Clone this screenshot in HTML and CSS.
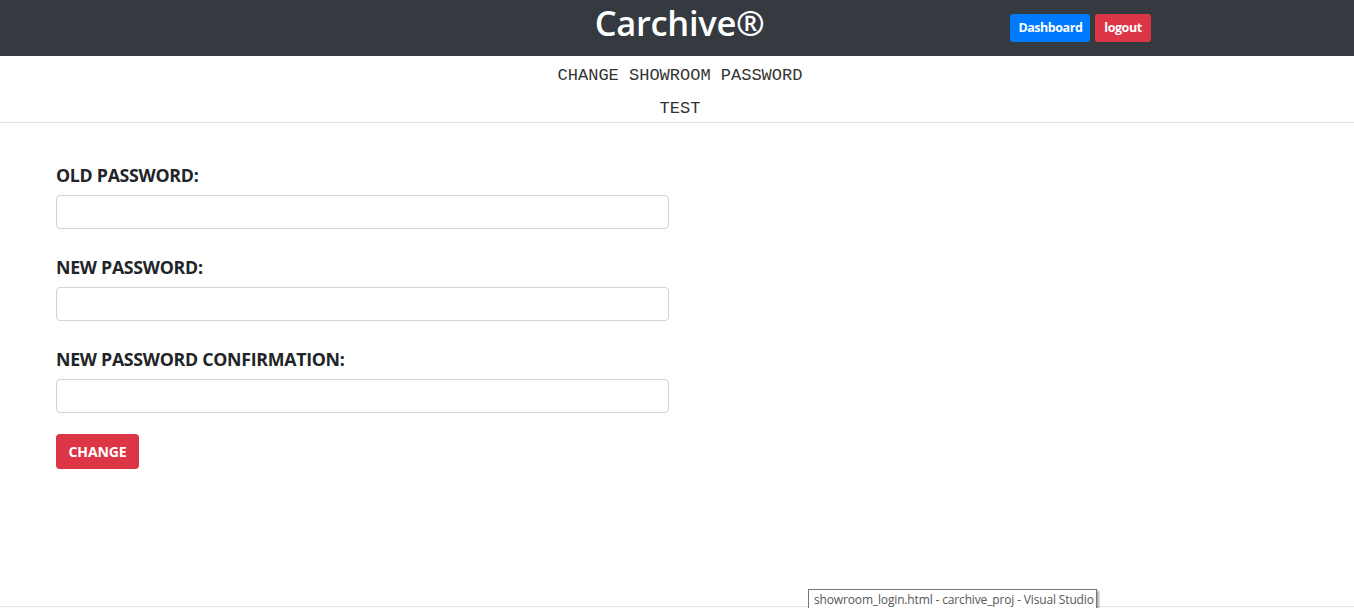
FILE: index.html
```html
<!DOCTYPE html>
<html>
<head>
<meta charset="utf-8">
<link rel="stylesheet" href="styles.css">
</head>
<body>
<header class="topbar">
  <div class="side"></div>
  <h1 class="brand">Carchive®</h1>
  <div class="side actions">
    <a class="btn btn-blue">Dashboard</a>
    <a class="btn btn-red">logout</a>
  </div>
</header>
<section class="subhead">
  <p>CHANGE SHOWROOM PASSWORD</p>
  <p>TEST</p>
</section>
<main class="form">
  <div class="group">
    <label>OLD PASSWORD:</label>
    <input type="password">
  </div>
  <div class="group">
    <label>NEW PASSWORD:</label>
    <input type="password">
  </div>
  <div class="group">
    <label>NEW PASSWORD CONFIRMATION:</label>
    <input type="password">
  </div>
  <button class="submit">CHANGE</button>
</main>
<div class="tooltip">showroom_login.html - carchive_proj - Visual Studio</div>
<div class="bottomline"></div>
</body>
</html>
```
FILE: styles.css
```css
* { box-sizing: border-box; }
html, body { margin: 0; padding: 0; }
body {
  font-family: "Open Sans", "Noto Sans", sans-serif;
  background: #fff;
  color: #212529;
  height: 608px;
  position: relative;
  overflow: hidden;
}
.topbar {
  height: 56px;
  background: #343a40;
  display: grid;
  grid-template-columns: 1fr auto 1fr;
  align-items: center;
}
.brand {
  margin: 0;
  color: #fff;
  font-size: 34.5px;
  font-weight: 600;
  line-height: 44px;
  letter-spacing: -0.3px;
  padding-left: 5px;
  padding-bottom: 10px;
}
.actions {
  display: flex;
  gap: 5px;
  padding-left: 246px;
  padding-bottom: 1px;
}
.btn {
  display: inline-block;
  height: 28px;
  line-height: 28px;
  padding: 0 8px;
  border-radius: 3px;
  color: #fff;
  font-size: 12.5px;
  font-weight: 700;
  letter-spacing: -0.45px;
}
.btn-blue { background: #007bff; }
.btn-red { background: #dc3545; padding: 0 9px; }
.subhead {
  border-bottom: 1px solid #dee2e6;
  text-align: center;
  font-family: "Liberation Mono", "Courier New", monospace;
  font-size: 17px;
  color: #333;
  padding-top: 10px;
  height: 67px;
  padding-left: 6px;
}
.subhead p { margin: 0 0 13px 0; line-height: 20px; }
.form {
  padding: 40px 0 0 56px;
  width: 669px;
}
.group { margin-bottom: 26px; }
.group label {
  display: block;
  font-weight: 700;
  font-size: 17.8px;
  line-height: 24px;
  letter-spacing: -0.3px;
  margin-bottom: 8px;
}
.group input {
  display: block;
  width: 613px;
  height: 34px;
  border: 1px solid #ced4da;
  border-radius: 4px;
  background: #fff;
}
.group:last-of-type { margin-bottom: 21px; }
.submit {
  display: block;
  background: #dc3545;
  color: #fff;
  border: none;
  border-radius: 4px;
  height: 35px;
  width: 83px;
  font-family: "Open Sans", "Noto Sans", sans-serif;
  font-weight: 700;
  font-size: 14px;
  letter-spacing: -0.1px;
  padding: 0;
}
.tooltip {
  position: absolute;
  left: 808px;
  top: 589px;
  width: 289px;
  height: 22px;
  border: 1px solid #767676;
  background: #fff;
  font-family: "Open Sans", "Noto Sans", sans-serif;
  font-size: 12px;
  color: #575757;
  padding: 1px 0 0 5px;
  box-shadow: 2px 2px 2px rgba(0,0,0,0.35);
  letter-spacing: -0.15px;
  white-space: nowrap;
}
.bottomline {
  position: absolute;
  left: 0;
  right: 0;
  top: 606px;
  height: 1px;
  background: #e5e5e5;
  z-index: -1;
}
```
